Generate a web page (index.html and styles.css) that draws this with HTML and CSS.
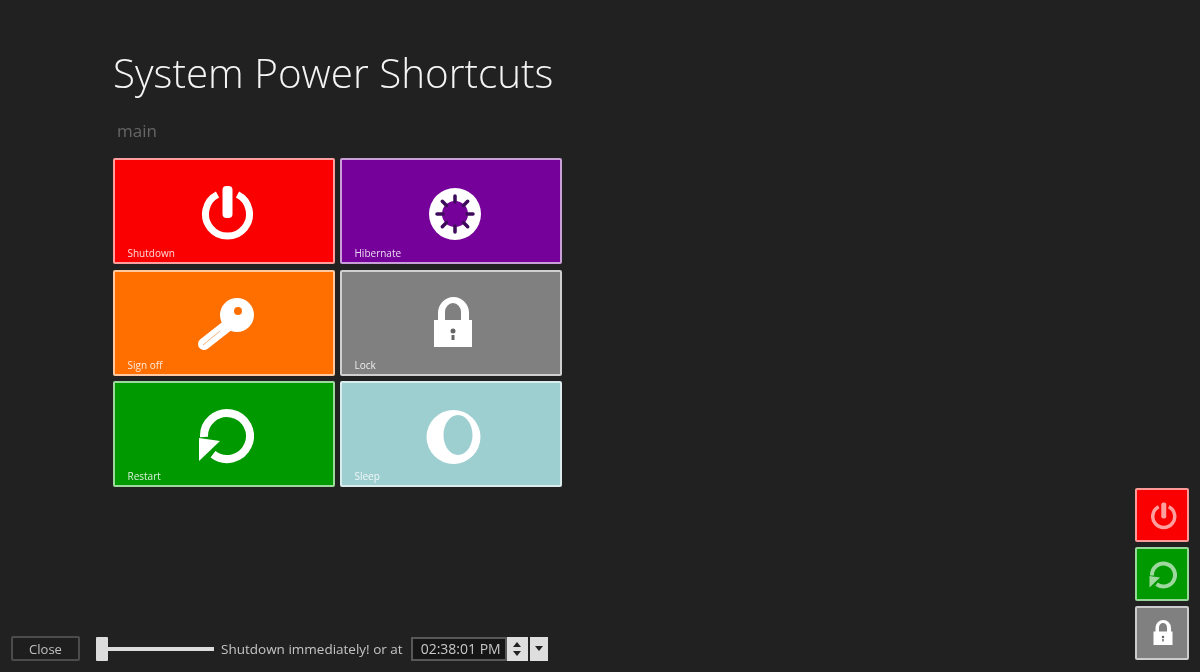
FILE: index.html
```html
<!DOCTYPE html>
<html lang="en">
<head>
    <meta charset="UTF-8">
    <title>System Power Shortcuts</title>
    <link rel="stylesheet" href="styles.css">
</head>
<body>
    <!-- icons, all drawn on a 60x60 box -->
    <svg class="icon-defs" aria-hidden="true">
        <symbol id="i-power" viewBox="0 0 60 60">
            <path d="M23.500 13.500 A22 22 0 1 0 43.500 13.500" fill="none" stroke="currentColor" stroke-width="7"/>
            <rect x="28.500" y="5" width="10" height="32" rx="4" fill="currentColor"/>
        </symbol>
        <symbol id="i-hibernate" viewBox="0 0 60 60">
            <path fill="currentColor" fill-rule="evenodd" d="M34 7a26 26 0 1 1 0 52a26 26 0 1 1 0-52zM34 20a13 13 0 1 0 0 26a13 13 0 1 0 0-26z"/>
            <g stroke="#3d0a5c" stroke-width="3.500" stroke-linecap="round">
                <path d="M34 21V15M34 45V51M22 33H16M46 33H52M25.500 24.500L21.300 20.300M42.500 24.500L46.700 20.300M25.500 41.500L21.300 45.700M42.500 41.500L46.700 45.700"/>
            </g>
        </symbol>
        <symbol id="i-key" viewBox="0 0 60 60">
            <path fill="currentColor" fill-rule="evenodd" d="M43 5a17 17 0 1 1 0 34a17 17 0 1 1 0-34zM44 14a4 4 0 1 0 0 8a4 4 0 1 0 0-8z"/>
            <path d="M33 33L10 51" stroke="currentColor" stroke-width="12" stroke-linecap="round"/>
            <path d="M9 52L26 38" stroke="#f2b27c" stroke-width="1"/>
        </symbol>
        <symbol id="i-lock" viewBox="0 0 60 60">
            <path fill="currentColor" fill-rule="evenodd" d="M13 27h4v-7a15.500 16 0 0 1 31 0v7h3v27H13zM24 27h16v-8a8 9 0 0 0-16 0z"/>
            <circle cx="32" cy="38" r="2.500" fill="#666"/>
            <rect x="30.500" y="42" width="3" height="5" fill="#666"/>
        </symbol>
        <symbol id="i-restart" viewBox="0 0 60 60">
            <path d="M10 33 A23 23 0 1 1 19 50.300" fill="none" stroke="currentColor" stroke-width="8"/>
            <path d="M5 34L26 37L5 57z" fill="currentColor"/>
        </symbol>
        <symbol id="i-sleep" viewBox="0 0 60 60">
            <path fill="currentColor" fill-rule="evenodd" d="M32.500 6a27 27 0 1 1 0 54a27 27 0 1 1 0-54zM37 11c-8 0-14.500 9-14.500 20s6.500 20 14.500 20s14.500-9 14.500-20s-6.500-20-14.500-20z"/>
        </symbol>
    </svg>

    <div class="page">
        <div class="content">
            <h1 class="title">System Power Shortcuts</h1>
            <div class="group-name">main</div>

            <div class="tiles">
                <div class="tile red">
                    <svg class="tile-icon"><use href="#i-power"/></svg>
                    <span class="tile-label">Shutdown</span>
                </div>
                <div class="tile purple">
                    <svg class="tile-icon"><use href="#i-hibernate"/></svg>
                    <span class="tile-label">Hibernate</span>
                </div>
                <div class="tile orange">
                    <svg class="tile-icon"><use href="#i-key"/></svg>
                    <span class="tile-label">Sign off</span>
                </div>
                <div class="tile grey">
                    <svg class="tile-icon"><use href="#i-lock"/></svg>
                    <span class="tile-label">Lock</span>
                </div>
                <div class="tile green">
                    <svg class="tile-icon"><use href="#i-restart"/></svg>
                    <span class="tile-label">Restart</span>
                </div>
                <div class="tile teal">
                    <svg class="tile-icon"><use href="#i-sleep"/></svg>
                    <span class="tile-label">Sleep</span>
                </div>
            </div>
        </div>

        <div class="bottom-bar">
            <div class="controls">
                <button class="close-btn">Close</button>
                <div class="slider">
                    <span class="slider-thumb"></span>
                    <span class="slider-track"></span>
                </div>
                <span class="delay-text">Shutdown immediately! or at</span>
                <div class="time-box">02:38:01 PM</div>
                <div class="spinner">
                    <span class="arrow-up"></span>
                    <span class="arrow-down"></span>
                </div>
                <div class="dropdown"><span class="arrow-down"></span></div>
            </div>

            <div class="dock">
                <div class="dock-btn red"><svg class="dock-icon"><use href="#i-power"/></svg></div>
                <div class="dock-btn green"><svg class="dock-icon"><use href="#i-restart"/></svg></div>
                <div class="dock-btn grey"><svg class="dock-icon"><use href="#i-lock"/></svg></div>
            </div>
        </div>
    </div>
</body>
</html>
```

FILE: styles.css
```css
body {
    margin: 0;
    background-color: #212121;
    font-family: 'Open Sans', sans-serif;
    overflow: hidden;
}

.icon-defs {
    display: none;
}

/* the reference is a soft photo of the screen */
.page {
    display: flex;
    flex-direction: column;
    height: 672px;
    filter: blur(0.5px);
}

/* title and tiles */
.content {
    padding: 46px 0 0 113px;
}

.title {
    margin: 0;
    font-size: 40.4px;
    line-height: 54px;
    font-weight: 300;
    color: #f4f4f4;
}

.group-name {
    margin: 20px 0 16px 4px;
    font-size: 17px;
    line-height: 22px;
    color: #666;
}

.tiles {
    display: grid;
    grid-template-columns: 222px 222px;
    grid-auto-rows: 106px;
    column-gap: 5px;
    row-gap: 5.5px;
}

.tile {
    position: relative;
    box-sizing: border-box;
    display: flex;
    align-items: center;
    justify-content: center;
    border: 2px solid rgba(255, 255, 255, 0.62);
    border-radius: 2px;
    color: #fff;
}

.tile-icon {
    width: 60px;
    height: 60px;
}

.tile-label {
    position: absolute;
    left: 12.5px;
    bottom: 2px;
    font-size: 10px;
    line-height: 14px;
    color: rgba(255, 255, 255, 0.85);
}

.red { background-color: #fb0000; }
.purple { background-color: #75009a; }
.orange { background-color: #ff6f00; }
.grey { background-color: #808080; }
.green { background-color: #009900; }
.teal { background-color: #9dcfd1; }

/* bottom row */
.bottom-bar {
    display: flex;
    justify-content: space-between;
    align-items: flex-end;
    margin-top: auto;
    padding: 0 11px 11px;
}

.controls {
    display: flex;
    align-items: center;
    height: 25px;
}

.close-btn {
    box-sizing: border-box;
    width: 69px;
    height: 25px;
    padding: 0;
    background-color: #1e1e1e;
    border: 2px solid #4c4c4c;
    border-radius: 2px;
    font-family: inherit;
    font-size: 13px;
    color: #c0c0c0;
}

.slider {
    display: flex;
    align-items: center;
    width: 118px;
    margin-left: 16px;
}

.slider-thumb {
    width: 12px;
    height: 24px;
    background-color: #dcdcdc;
    border-radius: 1px;
}

.slider-track {
    flex: 1;
    height: 4px;
    background-color: #dcdcdc;
}

.delay-text {
    margin-left: 7px;
    font-size: 13.5px;
    color: #c4c4c4;
    white-space: nowrap;
}

.time-box {
    box-sizing: border-box;
    width: 96px;
    height: 24px;
    margin-left: 8px;
    padding-left: 4px;
    background-color: #161616;
    border: 2px solid #585858;
    font-size: 14px;
    line-height: 20px;
    text-align: center;
    color: #c8c8c8;
}

.spinner {
    display: flex;
    flex-direction: column;
    align-items: center;
    justify-content: space-around;
    box-sizing: border-box;
    width: 21px;
    height: 24px;
    padding: 3px 0;
    background-color: #dedede;
}

.dropdown {
    display: flex;
    align-items: center;
    justify-content: center;
    width: 18px;
    height: 24px;
    margin-left: 2px;
    background-color: #dedede;
}

.arrow-up,
.arrow-down {
    width: 0;
    height: 0;
    border-left: 4px solid transparent;
    border-right: 4px solid transparent;
}

.arrow-up {
    border-bottom: 5px solid #222;
}

.arrow-down {
    border-top: 5px solid #222;
}

/* shortcuts on the right */
.dock {
    display: flex;
    flex-direction: column;
    gap: 5px;
    margin-bottom: 1px;
}

.dock-btn {
    box-sizing: border-box;
    display: flex;
    align-items: center;
    justify-content: center;
    width: 54px;
    height: 54px;
    border: 2px solid rgba(255, 255, 255, 0.6);
    border-radius: 2px;
    color: rgba(255, 255, 255, 0.62);
}

.dock-btn.grey {
    color: #fff;
}

.dock-icon {
    width: 30px;
    height: 30px;
}
```
